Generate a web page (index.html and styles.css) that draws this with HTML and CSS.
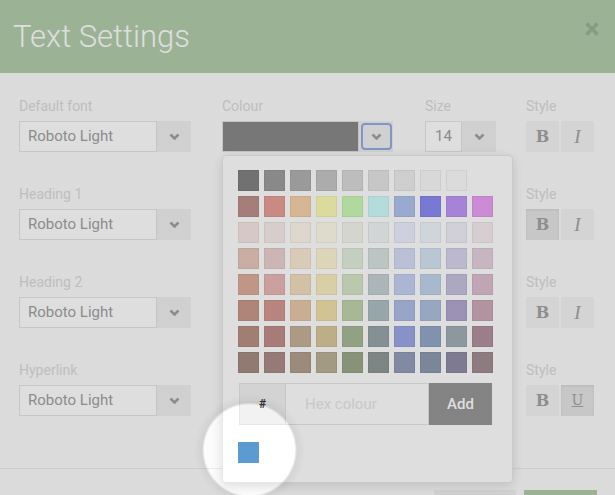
FILE: index.html
```html
<!DOCTYPE html>
<html lang="en">
<head>
<meta charset="utf-8">
<title>Text Settings</title>
<link rel="stylesheet" href="styles.css">
</head>
<body>
<div class="modal">
  <header class="modal-header">
    <h1 class="modal-title">Text Settings</h1>
    <button class="close" aria-label="Close"><svg width="16" height="16" viewBox="0 0 16 16"><path d="M2.5 2.5L13.5 13.5M13.5 2.5L2.5 13.5"/></svg></button>
  </header>
  <main class="modal-body">
    <div class="fields">
      <div class="field"><label class="label">Default font</label><div class="select"><span class="select-value font-value">Roboto Light</span><span class="select-arrow"><svg class="chev" width="11" height="7" viewBox="0 0 11 7"><path d="M1.5 1.5L5.5 5.5L9.5 1.5"/></svg></span></div></div>
      <div class="field"><label class="label">Colour</label><div class="select"><span class="swatch"></span><span class="select-arrow focused"><svg class="chev" width="11" height="7" viewBox="0 0 11 7"><path d="M1.5 1.5L5.5 5.5L9.5 1.5"/></svg></span></div></div>
      <div class="field"><label class="label">Size</label><div class="select"><span class="select-value size-value">14</span><span class="select-arrow"><svg class="chev" width="11" height="7" viewBox="0 0 11 7"><path d="M1.5 1.5L5.5 5.5L9.5 1.5"/></svg></span></div></div>
      <div class="field"><label class="label">Style</label><div class="style-group"><button class="style-btn b">B</button><button class="style-btn i">I</button></div></div>

      <div class="field"><label class="label">Heading 1</label><div class="select"><span class="select-value font-value">Roboto Light</span><span class="select-arrow"><svg class="chev" width="11" height="7" viewBox="0 0 11 7"><path d="M1.5 1.5L5.5 5.5L9.5 1.5"/></svg></span></div></div>
      <div class="field covered"><div class="select"><span class="swatch"></span><span class="select-arrow"></span></div></div>
      <div class="field covered"><div class="select"><span class="select-value size-value"></span><span class="select-arrow"></span></div></div>
      <div class="field"><label class="label">Style</label><div class="style-group"><button class="style-btn b active">B</button><button class="style-btn i">I</button></div></div>

      <div class="field"><label class="label">Heading 2</label><div class="select"><span class="select-value font-value">Roboto Light</span><span class="select-arrow"><svg class="chev" width="11" height="7" viewBox="0 0 11 7"><path d="M1.5 1.5L5.5 5.5L9.5 1.5"/></svg></span></div></div>
      <div class="field covered"><div class="select"><span class="swatch"></span><span class="select-arrow"></span></div></div>
      <div class="field covered"><div class="select"><span class="select-value size-value"></span><span class="select-arrow"></span></div></div>
      <div class="field"><label class="label">Style</label><div class="style-group"><button class="style-btn b">B</button><button class="style-btn i">I</button></div></div>

      <div class="field"><label class="label">Hyperlink</label><div class="select"><span class="select-value font-value">Roboto Light</span><span class="select-arrow"><svg class="chev" width="11" height="7" viewBox="0 0 11 7"><path d="M1.5 1.5L5.5 5.5L9.5 1.5"/></svg></span></div></div>
      <div class="field covered"><div class="select"><span class="swatch"></span><span class="select-arrow"></span></div></div>
      <div class="field covered"><div class="select"><span class="select-value size-value"></span><span class="select-arrow"></span></div></div>
      <div class="field"><label class="label">Style</label><div class="style-group"><button class="style-btn b">B</button><button class="style-btn u active">U</button></div></div>
    </div>
  </main>
  <footer class="modal-footer">
    <button class="btn btn-cancel" aria-label="Cancel"></button>
    <button class="btn btn-save" aria-label="Save"></button>
  </footer>

  <div class="picker">
    <div class="palette">
      <span class="cell" style="background:#828282"></span><span class="cell" style="background:#9d9d9d"></span><span class="cell" style="background:#b1b1b1"></span><span class="cell" style="background:#c5c5c5"></span><span class="cell" style="background:#d9d9d9"></span><span class="cell" style="background:#e4e4e4"></span><span class="cell" style="background:#ededed"></span><span class="cell" style="background:#f8f8f8"></span><span class="cell" style="background:#fbfbfb"></span><span class="cell blank" style="background:#ffffff"></span>
      <span class="cell" style="background:#bd908a"></span><span class="cell" style="background:#e79f97"></span><span class="cell" style="background:#f5d0a8"></span><span class="cell" style="background:#fdfcb6"></span><span class="cell" style="background:#cafab4"></span><span class="cell" style="background:#cefcfd"></span><span class="cell" style="background:#b1c2ee"></span><span class="cell" style="background:#8a8af4"></span><span class="cell" style="background:#bf96f6"></span><span class="cell" style="background:#e99ff4"></span>
      <span class="cell" style="background:#f6e6e3"></span><span class="cell" style="background:#f8ebeb"></span><span class="cell" style="background:#fdf6ea"></span><span class="cell" style="background:#fffbeb"></span><span class="cell" style="background:#f3f6eb"></span><span class="cell" style="background:#f0f5f6"></span><span class="cell" style="background:#ebeffd"></span><span class="cell" style="background:#eff5fd"></span><span class="cell" style="background:#efeef7"></span><span class="cell" style="background:#f6ecef"></span>
      <span class="cell" style="background:#e7c7ba"></span><span class="cell" style="background:#ecd0d0"></span><span class="cell" style="background:#fae8d3"></span><span class="cell" style="background:#fdf5d3"></span><span class="cell" style="background:#e2eedb"></span><span class="cell" style="background:#d8e1e1"></span><span class="cell" style="background:#d5ddf6"></span><span class="cell" style="background:#d5e3f2"></span><span class="cell" style="background:#d8d3eb"></span><span class="cell" style="background:#e4d1dd"></span>
      <span class="cell" style="background:#dcad9a"></span><span class="cell" style="background:#e7b8b6"></span><span class="cell" style="background:#f2dcbd"></span><span class="cell" style="background:#f8eebf"></span><span class="cell" style="background:#d5e5c5"></span><span class="cell" style="background:#c5d1d4"></span><span class="cell" style="background:#c4d0f3"></span><span class="cell" style="background:#c2d4eb"></span><span class="cell" style="background:#c5c1df"></span><span class="cell" style="background:#dcbfcf"></span>
      <span class="cell" style="background:#c8988a"></span><span class="cell" style="background:#d49890"></span><span class="cell" style="background:#e7c8a7"></span><span class="cell" style="background:#f1e0aa"></span><span class="cell" style="background:#c1d3ac"></span><span class="cell" style="background:#aebfc4"></span><span class="cell" style="background:#aebce6"></span><span class="cell" style="background:#adc0de"></span><span class="cell" style="background:#b1a7d0"></span><span class="cell" style="background:#ccaab8"></span>
      <span class="cell" style="background:#b89183"></span><span class="cell" style="background:#c08d89"></span><span class="cell" style="background:#c7b199"></span><span class="cell" style="background:#d8c89b"></span><span class="cell" style="background:#a7ba97"></span><span class="cell" style="background:#98a5aa"></span><span class="cell" style="background:#9ba9e4"></span><span class="cell" style="background:#93a8c8"></span><span class="cell" style="background:#a1adb6"></span><span class="cell" style="background:#b2919f"></span>
      <span class="cell" style="background:#a58c83"></span><span class="cell" style="background:#ac8c88"></span><span class="cell" style="background:#b39f8c"></span><span class="cell" style="background:#bab195"></span><span class="cell" style="background:#9ca88b"></span><span class="cell" style="background:#8f9898"></span><span class="cell" style="background:#949ebb"></span><span class="cell" style="background:#8d9ab1"></span><span class="cell" style="background:#918ca8"></span><span class="cell" style="background:#a28d93"></span>
    </div>
    <div class="hex-row">
      <span class="hex-prefix">#</span>
      <span class="hex-input">Hex colour</span>
      <button class="hex-add">Add</button>
    </div>
    <div class="recent">
      <span class="recent-swatch"></span>
    </div>
  </div>

  <div class="spotlight"></div>
</div>
</body>
</html>
```

FILE: styles.css
```css
* { box-sizing: border-box; }

html, body {
  margin: 0;
  padding: 0;
}

body {
  width: 615px;
  height: 495px;
  overflow: hidden;
  background: #fcfcfc;
  font-family: Roboto, "Noto Sans", "Liberation Sans", sans-serif;
}

.modal {
  position: relative;
  width: 615px;
  height: 495px;
  overflow: hidden;
  background: #fcfcfc;
}

/* header */
.modal-header {
  height: 73px;
  background: #b2ccab;
  display: flex;
  align-items: center;
  justify-content: space-between;
  padding: 0 15px 0 13px;
}

.modal-title {
  margin: 0;
  font-family: Roboto, sans-serif;
  font-weight: 300;
  font-size: 31px;
  line-height: 36px;
  color: #ffffff;
}

.close {
  align-self: flex-start;
  margin-top: 21px;
  width: 16px;
  height: 16px;
  padding: 0;
  border: 0;
  background: none;
  color: #9bb297;
  display: block;
}

.close svg { display: block; }
.close path {
  fill: none;
  stroke: currentColor;
  stroke-width: 3.6;
}

/* body */
.modal-body {
  height: 395px;
  padding: 25px 0 0 19px;
}

.fields {
  display: grid;
  grid-template-columns: 203px 203px 101px 68px;
  row-gap: 34px;
}

.label {
  display: block;
  font-size: 14px;
  line-height: 16px;
  color: #dadada;
  margin-bottom: 7px;
}

.field.covered {
  padding-top: 23px;
}

.select {
  display: flex;
  height: 31px;
}

.select-value {
  display: block;
  height: 31px;
  border: 1px solid #e4e4e4;
  background: #ffffff;
  color: #a1a1a1;
  font-size: 15px;
  line-height: 29px;
}

.font-value {
  width: 138px;
  padding-left: 8px;
}

.size-value {
  width: 37px;
  padding-left: 9px;
}

.swatch {
  display: block;
  width: 137px;
  height: 31px;
  background: #898989;
  border: 1px solid #e2e2e2;
}

.select-arrow {
  position: relative;
  width: 34px;
  height: 31px;
  background: #efefef;
  display: flex;
  align-items: center;
  justify-content: center;
  color: #a2a2a2;
}

.select-arrow.focused::after {
  content: "";
  position: absolute;
  left: 2px;
  top: 2px;
  right: 1px;
  bottom: 2px;
  border: 2px solid #92ace6;
  border-radius: 4px;
}

.chev { display: block; }
.chev path {
  fill: none;
  stroke: currentColor;
  stroke-width: 2.6;
}

.style-group {
  display: flex;
  gap: 2px;
}

.style-btn {
  width: 33px;
  height: 31px;
  padding: 0;
  border: 0;
  background: #f3f3f3;
  color: #a3a3a3;
  font-family: "DejaVu Serif", "Liberation Serif", serif;
  font-size: 17px;
  line-height: 31px;
  text-align: center;
}

.style-btn.b { font-weight: bold; font-size: 16px; }
.style-btn.i { font-style: italic; font-family: "Liberation Serif", serif; font-size: 19px; }
.style-btn.u { text-decoration: underline; font-size: 14px; }

.style-btn.active {
  background: #e5e5e5;
  box-shadow: inset 0 1px 3px rgba(0, 0, 0, 0.08);
}

/* footer */
.modal-footer {
  border-top: 1px solid #ececec;
  display: flex;
  justify-content: flex-end;
  gap: 8px;
  padding: 21px 18px 0 0;
}

.btn {
  height: 30px;
  border: 0;
  padding: 0;
}

.btn-cancel { width: 82px; background: #f0f0f0; }
.btn-save { width: 73px; background: #b2ccab; }

/* colour picker dropdown */
.picker {
  position: absolute;
  left: 222px;
  top: 155px;
  width: 291px;
  height: 328px;
  background: #ffffff;
  border: 1px solid #e8e8e8;
  border-radius: 4px;
  box-shadow: 0 3px 12px rgba(0, 0, 0, 0.13);
  padding: 14px 0 0 15px;
}

.palette {
  display: grid;
  grid-template-columns: repeat(10, 21px);
  grid-auto-rows: 21px;
  gap: 5px;
}

.cell {
  display: block;
  box-shadow: inset 0 0 0 1px rgba(0, 0, 0, 0.05);
}

.cell.blank { box-shadow: none; }

.hex-row {
  display: flex;
  margin: 10px 0 0 1px;
  width: 253px;
  height: 42px;
}

.hex-prefix {
  width: 47px;
  background: #f2f2f2;
  border: 1px solid #e6e6e6;
  display: flex;
  align-items: center;
  justify-content: center;
  font-size: 12px;
  font-weight: bold;
  color: #3a3a3a;
}

.hex-input {
  width: 143px;
  background: #ffffff;
  border: 1px solid #e6e6e6;
  border-left: 0;
  padding-left: 19px;
  font-size: 15px;
  line-height: 40px;
  color: #e6e6e6;
}

.hex-add {
  width: 63px;
  height: 42px;
  border: 0;
  padding: 0;
  background: #979797;
  color: #ffffff;
  font-family: Roboto, sans-serif;
  font-size: 15px;
  font-weight: 500;
}

.recent {
  display: flex;
  margin-top: 17px;
}

.recent-swatch {
  display: block;
  width: 21px;
  height: 21px;
  background: #5c9bd1;
}

/* spotlight overlay */
.spotlight {
  position: absolute;
  inset: 0;
  pointer-events: none;
  background: radial-gradient(circle 70px at 249.5px 450px,
    rgba(0, 0, 0, 0) 45px,
    rgba(0, 0, 0, 0.17) 47.5px,
    rgba(0, 0, 0, 0.13) 56px);
}
```
